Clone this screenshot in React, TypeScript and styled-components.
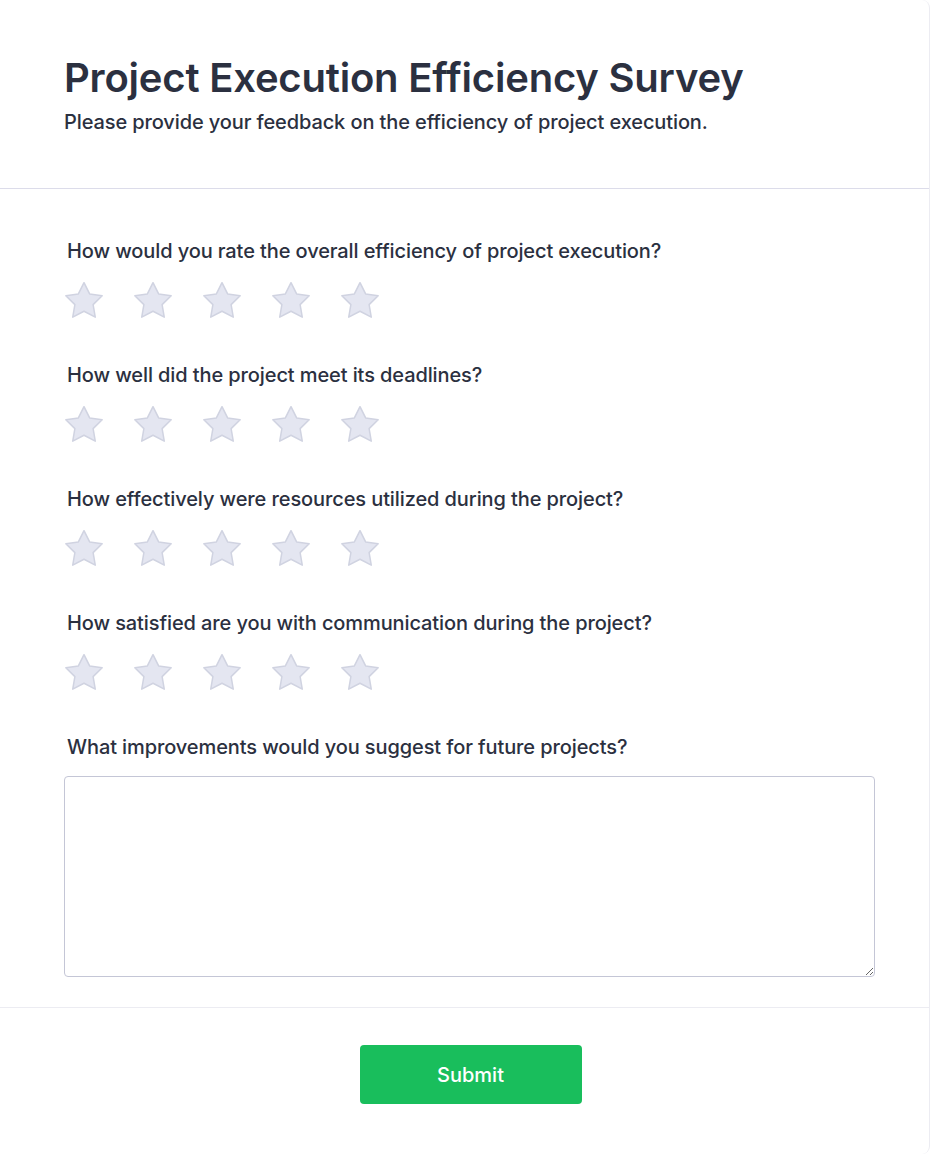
import styled, { createGlobalStyle } from "styled-components";

const GlobalStyle = createGlobalStyle`
  body {
    margin: 0;
    background: #ffffff;
    font-family: Inter, "Noto Sans", sans-serif;
    color: #2b3040;
  }`;

const Card = styled.div`
  width: 930px;
  min-height: 1154px;
  box-sizing: border-box;
  border-right: 1px solid #ececf2;
  border-radius: 0 8px 8px 0;
  background: #ffffff;`;

const Header = styled.header`
  padding: 54px 64px 52px;
  border-bottom: 1px solid #dcdcea;`;

const Title = styled.h1`
  margin: 0;
  font-size: 40px;
  line-height: 48px;
  font-weight: 600;
  letter-spacing: -0.2px;
  color: #2b3040;`;

const Subtitle = styled.p`
  margin: 6px 0 0;
  font-size: 20px;
  line-height: 28px;
  font-weight: 500;
  letter-spacing: -0.11px;
  color: #2b3040;`;

const Body = styled.main`
  padding: 48px 54px 30px 64px;
  border-bottom: 1px solid #ececf2;`;

const Question = styled.section`
  margin-bottom: 41px;

  &:last-child {
    margin-bottom: 0;
  }`;

const Label = styled.label`
  display: block;
  padding-left: 3px;
  font-size: 20px;
  line-height: 28px;
  font-weight: 500;
  letter-spacing: -0.1px;
  color: #2b3040;`;

const Stars = styled.div`
  display: flex;
  gap: 29px;
  margin-top: 15px;`;

const StarButton = styled.button`
  width: 40px;
  height: 40px;
  padding: 0;
  border: none;
  background: transparent;
  cursor: pointer;

  svg {
    display: block;
  }`;

const TextArea = styled.textarea`
  display: block;
  width: 100%;
  height: 201px;
  margin-top: 15px;
  box-sizing: border-box;
  border: 1px solid #c4c6d6;
  border-radius: 4px;
  padding: 10px;
  font-family: Inter, sans-serif;
  font-size: 16px;
  resize: vertical;`;

const Footer = styled.footer`
  display: flex;
  justify-content: center;
  padding: 37px 0 37px 12px;`;

const SubmitButton = styled.button`
  width: 222px;
  height: 59px;
  border: none;
  border-radius: 4px;
  background: #19be5c;
  color: #ffffff;
  font-family: Inter, sans-serif;
  font-size: 20px;
  font-weight: 500;
  cursor: pointer;`;

const questions = [
  "How would you rate the overall efficiency of project execution?",
  "How well did the project meet its deadlines?",
  "How effectively were resources utilized during the project?",
  "How satisfied are you with communication during the project?",
];

function Star() {
  return (
    <svg width="40" height="40" viewBox="0 0 24 24">
      <path
        d="M12 1.6L15.38 8.35 22.9 9.45 17.47 14.78 18.76 22.3 12 18.75 5.24 22.3 6.53 14.78 1.1 9.45 8.62 8.35Z"
        fill="#e4e6f1"
        stroke="#d0d3e1"
        strokeWidth="0.9"
        strokeLinejoin="round"
      />
    </svg>
  );
}

export default function App() {
  return (
    <>
      <GlobalStyle />
      <Card>
        <Header>
          <Title>Project Execution Efficiency Survey</Title>
          <Subtitle>Please provide your feedback on the efficiency of project execution.</Subtitle>
        </Header>
        <Body>
          {questions.map((q) => (
            <Question key={q}>
              <Label>{q}</Label>
              <Stars>
                {[1, 2, 3, 4, 5].map((n) => (
                  <StarButton key={n} aria-label={`${n} stars`}>
                    <Star />
                  </StarButton>
                ))}
              </Stars>
            </Question>
          ))}
          <Question>
            <Label>What improvements would you suggest for future projects?</Label>
            <TextArea />
          </Question>
        </Body>
        <Footer>
          <SubmitButton>Submit</SubmitButton>
        </Footer>
      </Card>
    </>
  );
}
